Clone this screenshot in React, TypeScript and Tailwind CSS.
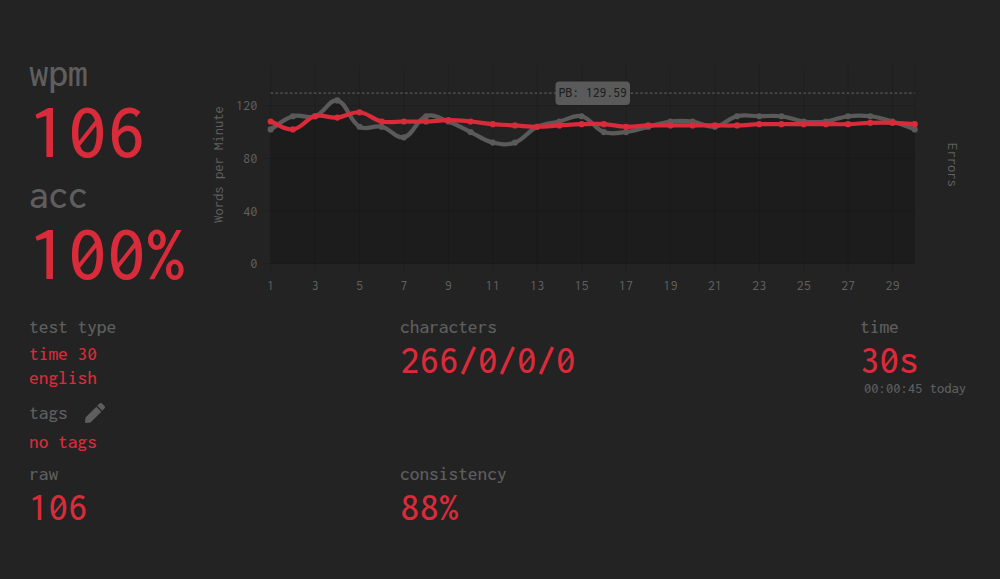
import type { ReactNode } from 'react';
import { FaPen } from 'react-icons/fa';

type Point = { x: number; y: number };

const wpm = [108, 102, 112, 111, 115, 108, 108, 108, 109, 108, 106, 105, 104, 105, 106, 106, 104, 105, 105, 105, 105, 105, 106, 106, 106, 106, 106, 107, 107, 106];
const raw = [102, 112, 112, 124, 104, 104, 96, 112, 108, 100, 92, 92, 104, 108, 112, 100, 100, 104, 108, 108, 104, 112, 112, 112, 108, 108, 112, 112, 108, 102];

const LEFT = 60.7;
const RIGHT = 704.7;
const TOP = 5;
const BOTTOM = 203.7;
const PB = 129.59;

const xAt = (second: number) => LEFT + ((second - 1) * (RIGHT - LEFT)) / 29;
const yAt = (value: number) => BOTTOM - value * 1.3167;
const toPoints = (values: number[]) => values.map((value, i) => ({ x: xAt(i + 1), y: yAt(value) }));

function curve(points: Point[], tension = 0.4) {
  const controls = points.map((point, i) => {
    const prev = points[i - 1] ?? point;
    const next = points[i + 1] ?? point;
    const before = Math.hypot(point.x - prev.x, point.y - prev.y);
    const after = Math.hypot(next.x - point.x, next.y - point.y);
    const a = (tension * before) / (before + after);
    const b = (tension * after) / (before + after);
    return {
      in: { x: point.x - a * (next.x - prev.x), y: point.y - a * (next.y - prev.y) },
      out: { x: point.x + b * (next.x - prev.x), y: point.y + b * (next.y - prev.y) },
    };
  });
  return points.reduce((path, point, i) => {
    if (i === 0) return `M${point.x},${point.y}`;
    const c1 = controls[i - 1].out;
    const c2 = controls[i].in;
    return `${path}C${c1.x},${c1.y} ${c2.x},${c2.y} ${point.x},${point.y}`;
  }, '');
}

function Series({ values, className }: { values: number[]; className: string }) {
  const points = toPoints(values);
  return (
    <g className={className}>
      <path d={curve(points)} fill="none" stroke="currentColor" strokeWidth={4.2} strokeLinejoin="round" />
      {points.map(({ x, y }) => (
        <circle key={x} cx={x} cy={y} r={3.1} fill="currentColor" />
      ))}
    </g>
  );
}

function Chart() {
  const seconds = Array.from({ length: 15 }, (_, i) => i * 2 + 1);
  return (
    <svg width="770" height="250" viewBox="0 0 770 250" className="shrink-0 text-[14.4px]">
      <path d={`${curve(toPoints(raw))}L${RIGHT},${BOTTOM}L${LEFT},${BOTTOM}Z`} fill="#1c1c1c" />
      <g stroke="#000" strokeOpacity={0.1} strokeWidth={1.2}>
        {seconds.map((second) => (
          <line key={second} x1={xAt(second)} x2={xAt(second)} y1={TOP} y2={BOTTOM + 8} />
        ))}
        <line x1={RIGHT} x2={RIGHT} y1={TOP} y2={BOTTOM} />
        {[0, 40, 80, 120].map((value) => (
          <line key={value} x1={LEFT - 8} x2={RIGHT} y1={yAt(value)} y2={yAt(value)} />
        ))}
      </g>
      <Series values={raw} className="text-[#5a5a5a]" />
      <Series values={wpm} className="text-[#da2b3a]" />
      <line x1={LEFT} x2={RIGHT} y1={yAt(PB)} y2={yAt(PB)} stroke="#5c5c5c" strokeWidth={1.3} strokeDasharray="2.4 2.4" />
      <rect x="345.5" y="21.5" width="74.5" height="23.5" rx="4" fill="#5a5a5a" />
      <text x="382.8" y="37" textAnchor="middle" fill="#202020" className="text-[13.6px] font-medium">PB: 129.59</text>
      <g fill="#606060">
        {seconds.map((second) => (
          <text key={second} x={xAt(second)} y="230.4" textAnchor="middle">{second}</text>
        ))}
        {[0, 40, 80, 120].map((value) => (
          <text key={value} x="47.5" y={yAt(value) + 4.6} textAnchor="end">{value}</text>
        ))}
        <text transform="translate(13 104.5) rotate(-90)" textAnchor="middle" className="text-[14.6px]">Words per Minute</text>
        <text transform="translate(738 105) rotate(90)" textAnchor="middle" className="text-[14.6px]">Errors</text>
      </g>
    </svg>
  );
}

function Headline({ label, value }: { label: string; value: string }) {
  return (
    <div>
      <div className="text-[39px] leading-[42px] text-[#5e5e5e]">{label}</div>
      <div className="-mt-[3px] text-[78px] leading-[80px]">{value}</div>
    </div>
  );
}

function Stat({ label, children }: { label: string; children: ReactNode }) {
  return (
    <div>
      <div className="text-[19.4px] leading-[26px] text-[#5e5e5e]">{label}</div>
      {children}
    </div>
  );
}

function Value({ children }: { children: ReactNode }) {
  return <div className="text-[39px] leading-10">{children}</div>;
}

export default function App() {
  return (
    <main className="h-[579px] w-[1000px] overflow-hidden bg-[#232323] pt-[52px] pl-[29px] font-['Inconsolata','Roboto_Mono',monospace] font-medium whitespace-nowrap text-[#da2b3a]">
      <div className="flex h-[262px]">
        <div className="flex w-[181px] shrink-0 flex-col gap-[3px]">
          <Headline label="wpm" value="106" />
          <Headline label="acc" value="100%" />
        </div>
        <div className="pt-2 font-normal">
          <Chart />
        </div>
      </div>

      <div className="grid grid-cols-[371px_460px_1fr] grid-rows-[147px_auto]">
        <div className="text-[19.4px] leading-6">
          <Stat label="test type">
            <div className="pt-0.5">
              time 30
              <br />
              english
            </div>
          </Stat>
          <div className="flex h-[30px] items-center gap-[17px] pt-5 pb-1 text-[#5e5e5e]">
            tags
            <FaPen size={20} />
          </div>
          <div className="pt-2.5">no tags</div>
        </div>
        <Stat label="characters">
          <Value>266/0/0/0</Value>
        </Stat>
        <Stat label="time">
          <Value>30s</Value>
          <div className="pl-1 text-[14.6px] leading-4 text-[#5e5e5e]">00:00:45 today</div>
        </Stat>
        <Stat label="raw">
          <Value>106</Value>
        </Stat>
        <Stat label="consistency">
          <Value>88%</Value>
        </Stat>
      </div>
    </main>
  );
}
